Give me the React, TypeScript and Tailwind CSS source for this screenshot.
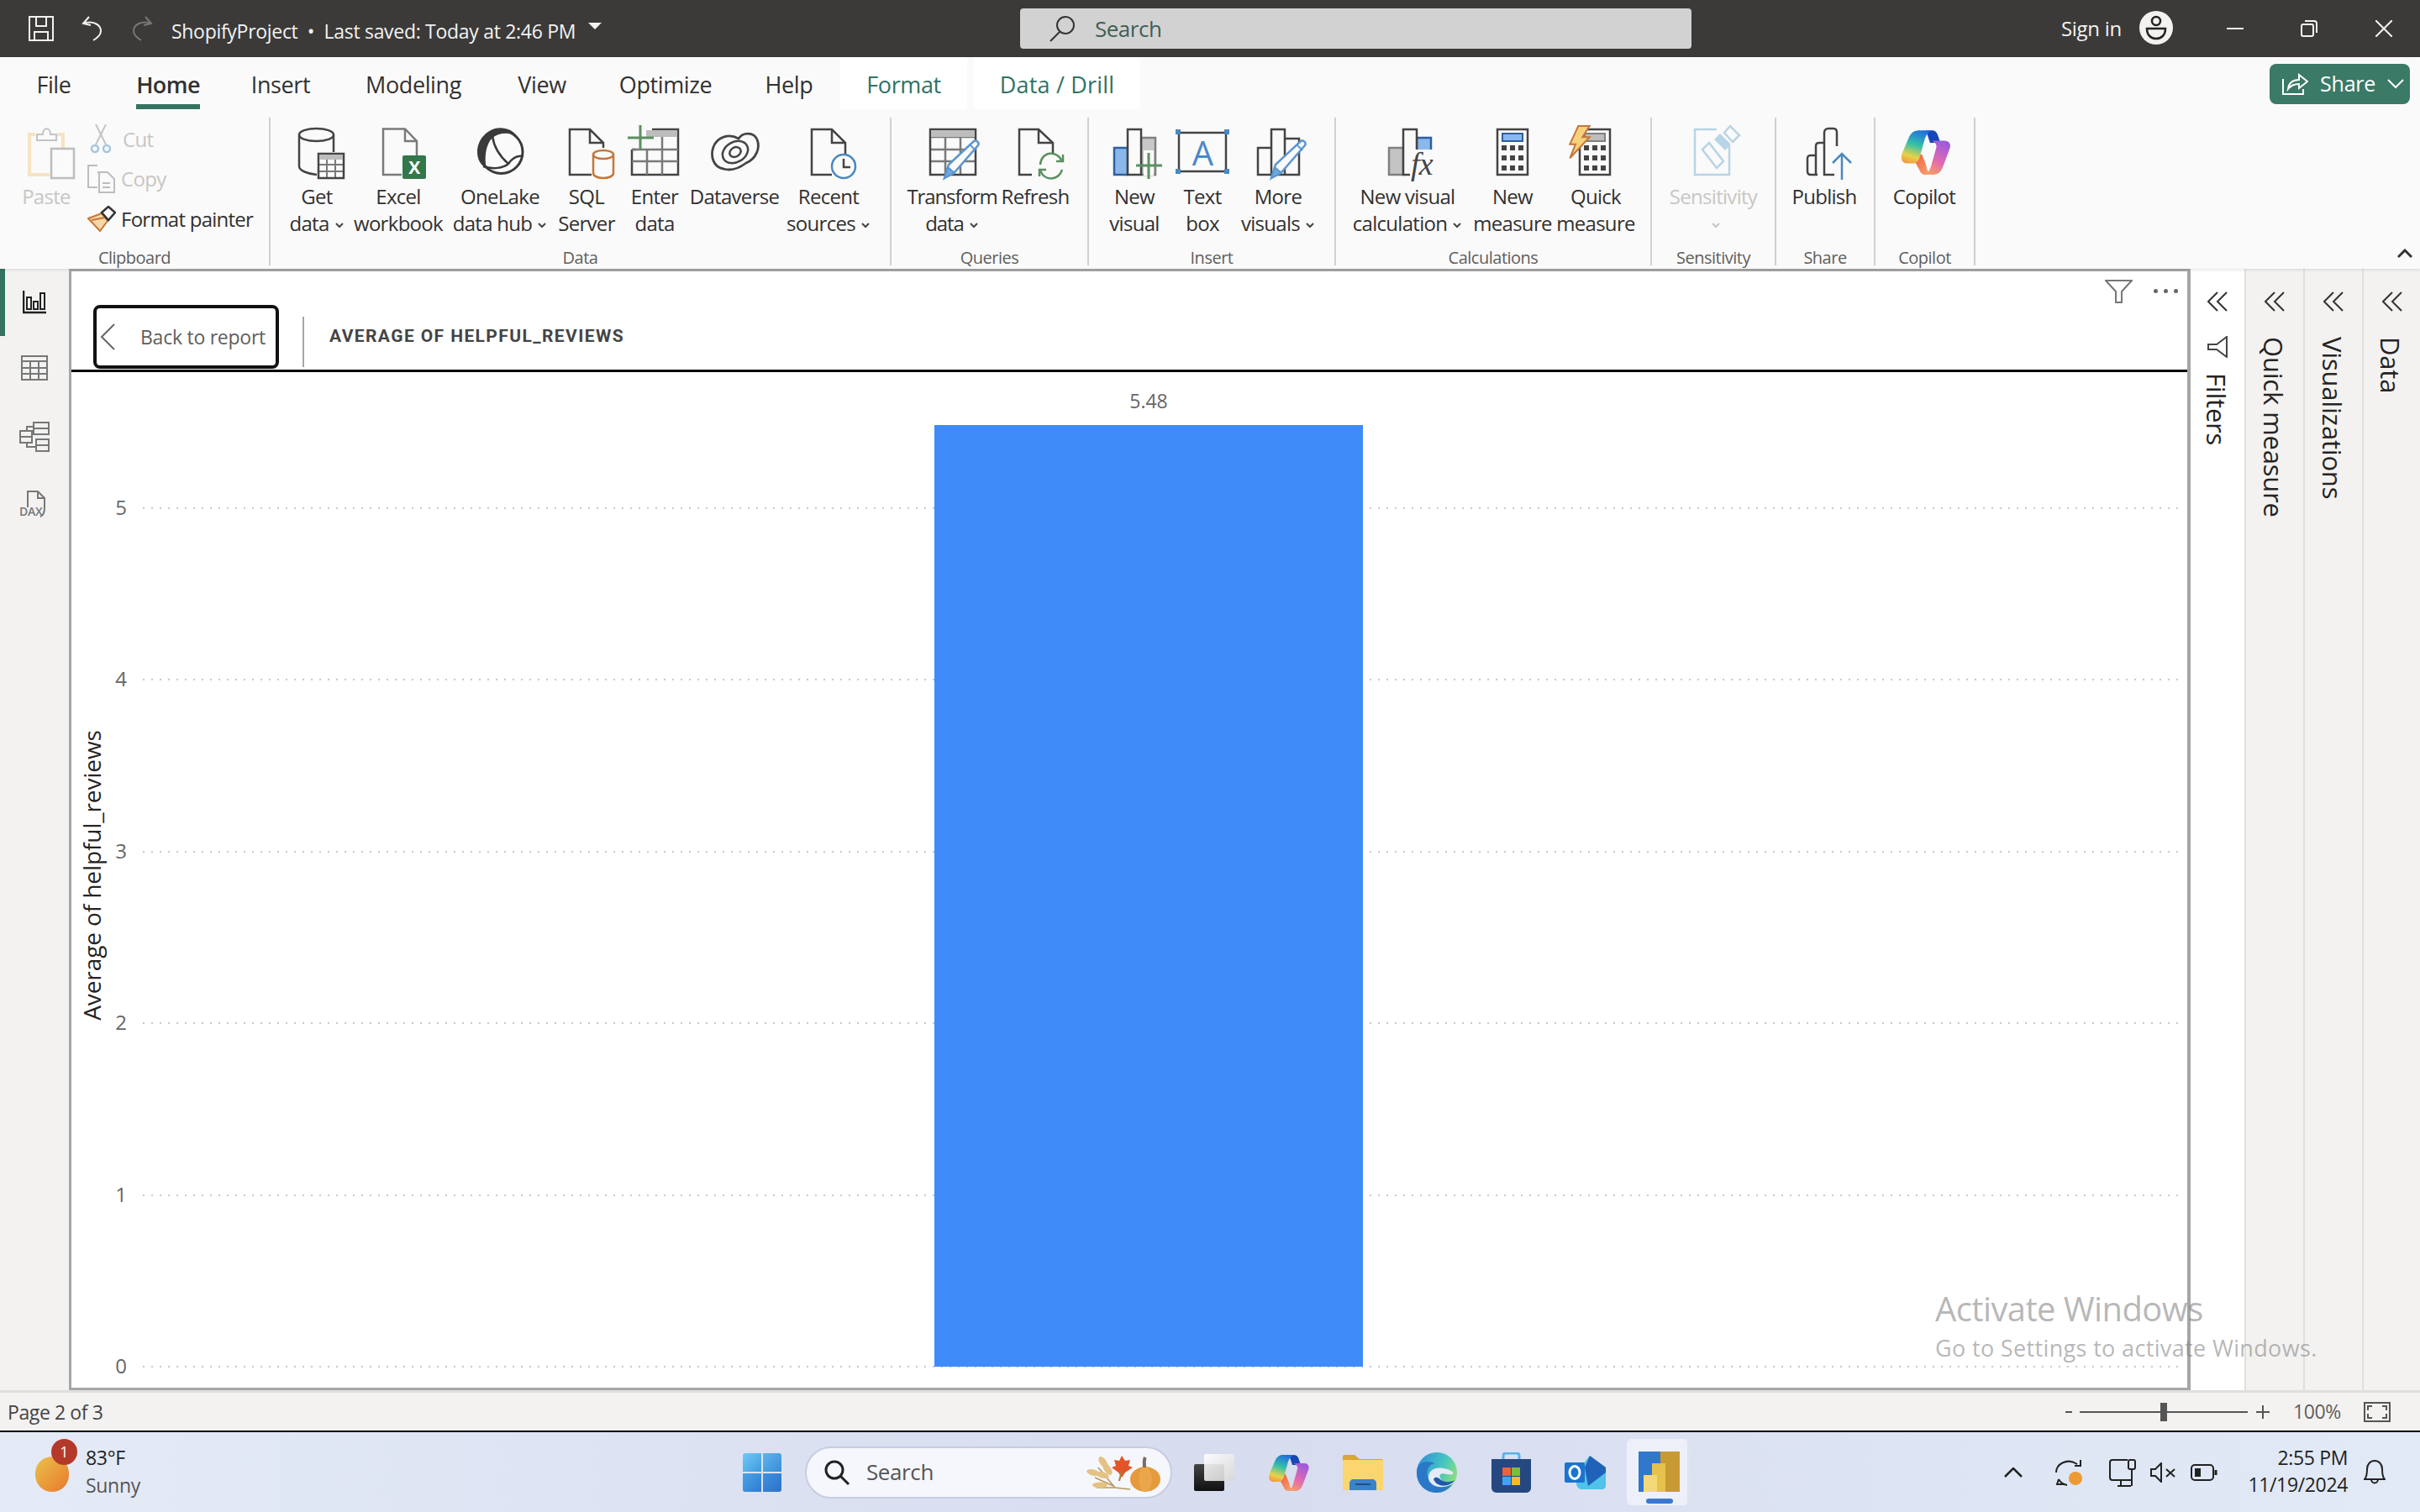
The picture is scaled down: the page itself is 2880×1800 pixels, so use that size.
import React from 'react'

const DK = '#444444'
const GR = '#7a7a7a'
const BL = '#4a88c0'
const GN = '#5b9060'

// 72x68 box, x = 0 is the middle of the button
const Ico = ({ children }: { children: React.ReactNode }) => (
    <svg width={72} height={68} viewBox="-36 0 72 68" fill="none" className="shrink-0 overflow-visible">{children}</svg>
)

const Pencil = ({ x, y }: { x: number; y: number }) => (
    <g transform={`translate(${x} ${y})`}>
        <path d="M0 0L5 -16L35 -44C38 -46 42 -42 40 -39L13 -8Z" fill="#fafafa" stroke="#5a96d0" strokeWidth={2.5} />
        <path d="M0 0L4 -13L12 -6Z" fill="#6fa8e0" stroke="#5a96d0" strokeWidth={2} />
        <path d="M30 -40L37 -33" stroke="#5a96d0" strokeWidth={2} />
    </g>
)

const TableIco = ({ x, w }: { x: number; w: number }) => (
    <g>
        <path d={`M${x} 15H${x + w}M${x + w / 3} 15V60M${x + (2 * w) / 3} 15V60M${x} 30H${x + w}M${x} 44H${x + w}`} stroke={GR} strokeWidth={2.5} />
        <rect x={x} y={6} width={w} height={54} stroke={DK} strokeWidth={2.5} />
        <rect x={x + 1} y={7} width={w - 2} height={8} fill="#bdbdbd" />
    </g>
)

const Calc = ({ x, fill, stroke }: { x: number; fill: string; stroke: string }) => (
    <g>
        <rect x={x} y={6} width={36} height={54} fill="#fafafa" stroke={DK} strokeWidth={2.5} />
        <rect x={x + 6} y={11} width={24} height={9} fill={fill} stroke={stroke} strokeWidth={2} />
        {[28, 40, 52].map(y => [8, 18, 28].map(o => <rect key={`${y}-${o}`} x={x + o - 3} y={y - 3} width={6} height={6} fill={DK} />))}
    </g>
)

const Icons: Record<string, React.ReactNode> = {
    paste: (
        <Ico>
            <path d="M-13 12H-20V60H4M13 12H20V28" stroke="#f6e2c4" strokeWidth={4} />
            <path d="M-11 19V12H-4C-4 3 5 3 5 12H12V19Z" fill="#fafafa" stroke="#c4c4c4" strokeWidth={2} />
            <rect x={6} y={29} width={27} height={35} fill="#fafafa" stroke="#bdbdbd" strokeWidth={2.5} />
        </Ico>
    ),
    get: (
        <Ico>
            <ellipse cx={-0.5} cy={12.5} rx={20.5} ry={7.5} stroke={DK} strokeWidth={2.5} />
            <path d="M-21 12.5V50C-21 55 -11 59 0 60M20 12.5V33" stroke={DK} strokeWidth={2.5} />
            <path d="M2 48H32M2 56H32M12 42V64M22 42V64" stroke={GR} strokeWidth={2} />
            <rect x={2} y={35} width={30} height={29} stroke={DK} strokeWidth={2.5} />
            <rect x={3} y={36} width={28} height={6} fill="#bdbdbd" />
        </Ico>
    ),
    excel: (
        <Ico>
            <path d="M4 60H-18V5.5H8L22 20V38M8 5.5V20H22" stroke={GR} strokeWidth={2.5} />
            <rect x={5} y={37} width={28} height={28} rx={2} fill="#33774a" />
            <text x={19} y={59} textAnchor="middle" fontSize={21} fontWeight={700} fill="#fff" fontFamily="Open Sans">X</text>
        </Ico>
    ),
    onelake: (
        <Ico>
            <circle cx={1.5} cy={33} r={25.5} stroke="#3a3a3a" strokeWidth={3} />
            <path d="M6 5C-10 1 -27 15 -27 33C-27 43 -22 49 -16 53C-19 40 -17 24 -9 16C0 9 14 9 22 16C17 9 12 6 6 5Z" fill="#3a3a3a" />
            <path d="M-9 14C-7 28 2 40 10 47M-20 50C-8 54 4 52 10 47C16 38 22 37 28 38" stroke="#3a3a3a" strokeWidth={2.5} />
        </Ico>
    ),
    sql: (
        <Ico>
            <path d="M6 60H-20V6H4L20 22V28M4 6V22H20" stroke={DK} strokeWidth={2.5} />
            <path d="M8 36V58C8 66 32 66 32 58V36" fill="#fafafa" stroke="#c4773a" strokeWidth={2.5} />
            <ellipse cx={20} cy={36} rx={12} ry={5} fill="#fafafa" stroke="#c4773a" strokeWidth={2.5} />
        </Ico>
    ),
    enter: (
        <Ico>
            <path d="M-27 30V60H28V6H-3M-27 30H-22" stroke={DK} strokeWidth={2.5} />
            <path d="M-27 30H28M-27 44H28M-9 30V60M9 15V60" stroke={GR} strokeWidth={2.5} />
            <rect x={-10} y={7} width={37} height={8} fill="#bdbdbd" />
            <path d="M-32 16H-1M-17 1V31" stroke={GN} strokeWidth={3} />
        </Ico>
    ),
    dataverse: (
        <Ico>
            <path d="M-13 53C-25 51 -29 38 -25 27C-20 14 -6 11 5 17C10 9 23 9 27 18C31 28 26 41 14 46C6 52 -3 56 -13 53Z" stroke={DK} strokeWidth={2.8} />
            <ellipse cx={1} cy={33} rx={16} ry={12} transform="rotate(-30 1 33)" stroke={DK} strokeWidth={2.5} />
            <ellipse cx={1} cy={33} rx={7} ry={5.5} transform="rotate(-30 1 33)" stroke={DK} strokeWidth={2.5} />
        </Ico>
    ),
    recent: (
        <Ico>
            <path d="M4 60H-20V6H4L20 22V36M4 6V22H20" stroke={DK} strokeWidth={2.5} />
            <circle cx={18} cy={50} r={14} fill="#fafafa" stroke={BL} strokeWidth={2.5} />
            <path d="M18 41V51H26" stroke={DK} strokeWidth={2.5} />
        </Ico>
    ),
    transform: (
        <Ico>
            <TableIco x={-26} w={54} />
            <Pencil x={-9} y={64} />
        </Ico>
    ),
    refresh: (
        <Ico>
            <path d="M-4 60H-19V6H4L21 22V34M4 6V22H21" stroke={DK} strokeWidth={2.5} />
            <path d="M6 48C7 32 26 30 32 44M32 54C28 68 9 68 6 54" stroke={GN} strokeWidth={2.5} />
            <path d="M25 44H33V36M13 54H5V62" stroke={GN} strokeWidth={2.5} />
        </Ico>
    ),
    newvisual: (
        <Ico>
            <rect x={8} y={16} width={17} height={44} fill="#c8c8c8" stroke="#808080" strokeWidth={2.5} />
            <rect x={-24} y={28} width={16} height={32} fill="#8ab8ea" stroke="#2f5f9f" strokeWidth={2.5} />
            <rect x={-8} y={6} width={16} height={54} fill="#fafafa" stroke={DK} strokeWidth={2.5} />
            <rect x={11} y={31} width={12} height={30} fill="#fafafa" />
            <path d="M2 49H33M17 34V65" stroke={GN} strokeWidth={3} />
        </Ico>
    ),
    textbox: (
        <Ico>
            <rect x={-28} y={10} width={56} height={46} stroke={DK} strokeWidth={2.5} />
            {[[-29, 9], [29, 9], [-29, 56], [29, 56]].map(([x, y]) => <rect key={`${x}${y}`} x={x - 3} y={y - 3} width={6} height={6} fill="#4a88c0" />)}
            <text x={0} y={49} textAnchor="middle" fontSize={40} fill="#4a88c8" fontFamily="Open Sans">A</text>
        </Ico>
    ),
    more: (
        <Ico>
            <path d="M-8 28H-24V60H-8M8 17H25V60H8M-8 60V6H8V60H-8" stroke={DK} strokeWidth={2.5} />
            <Pencil x={-8} y={64} />
        </Ico>
    ),
    fx: (
        <Ico>
            <rect x={-22} y={28} width={17} height={32} fill="#c4c4c4" stroke="#808080" strokeWidth={2.5} />
            <rect x={11} y={16} width={17} height={20} fill="#8ab8ea" stroke="#2f5f9f" strokeWidth={2.5} />
            <rect x={-5} y={6} width={16} height={54} fill="#fafafa" stroke={DK} strokeWidth={2.5} />
            <rect x={3} y={30} width={30} height={34} fill="#fafafa" />
            <text x={17} y={60} textAnchor="middle" fontSize={38} fontStyle="italic" fill={DK} fontFamily="Liberation Serif">fx</text>
        </Ico>
    ),
    measure: <Ico><Calc x={-18} fill="#8ab8ea" stroke="#2f5f9f" /></Ico>,
    quick: (
        <Ico>
            <Calc x={-19} fill="#bdbdbd" stroke="#808080" />
            <path d="M-20.7 2H-7.3L-15.7 15.3H-7.3L-30.7 40.3L-24 23.7H-30.7Z" fill="#f6d27e" stroke="#c4773a" strokeWidth={2} />
        </Ico>
    ),
    sensitivity: (
        <Ico>
            <path d="M4 6H-22V60H19V26" stroke="#b8d4e6" strokeWidth={2.5} />
            <path d="M-13 30L-5 22L12 44L4 52Z" fill="#fafafa" stroke="#b8d4e6" strokeWidth={2.5} />
            <path d="M1 18L14 31L21 24L8 11Z" fill="#b8d4e6" />
            <path d="M13 10L20 2L31 13L23 21Z" fill="#fafafa" stroke="#b8d4e6" strokeWidth={2.5} />
        </Ico>
    ),
    publish: (
        <Ico>
            <path d="M-8 60H-16C-19 60 -20 58 -20 56V41C-20 38 -19 37 -16 37H-10V26C-10 23 -8 22 -6 22H0V10C0 7 2 5 5 5H11C14 5 15 7 15 10V26M-10 37V60M0 22V60H12" stroke={DK} strokeWidth={2.5} />
            <path d="M21 66V35M10 46L21 35L32 46" stroke={BL} strokeWidth={2.5} />
        </Ico>
    ),
}

const CopilotLogo = ({ w, h, id }: { w: number; h: number; id: string }) => (
    <svg width={w} height={h} viewBox="0 0 48 44" className="shrink-0">
        <defs>
            <linearGradient id={`${id}a`} x1="0.6" y1="0" x2="0.3" y2="1">
                <stop offset="0" stopColor="#1f6fe0" />
                <stop offset="0.45" stopColor="#35c1a8" />
                <stop offset="0.8" stopColor="#e8d24a" />
                <stop offset="1" stopColor="#f0a040" />
            </linearGradient>
            <linearGradient id={`${id}b`} x1="0.7" y1="0" x2="0.3" y2="1">
                <stop offset="0" stopColor="#9a5ae0" />
                <stop offset="0.6" stopColor="#e26ab0" />
                <stop offset="1" stopColor="#f59a6a" />
            </linearGradient>
            <linearGradient id={`${id}c`} x1="0" y1="0" x2="1" y2="1">
                <stop offset="0" stopColor="#f05a3c" />
                <stop offset="1" stopColor="#f8a878" />
            </linearGradient>
        </defs>
        <path d="M24 1H30C33 1 35 3 36 7L38 13H28Z" fill="#1746b8" />
        <path d="M30 11H42C46 11 49 14 47 19L41 35C39 41 36 44 31 44H24C28 40 29 36 30 32L34 18C35 15 33 13 30 11Z" fill={`url(#${id}b)`} />
        <path d="M11 27L18 40C19 43 21 44 24 44H31C26 43 25 39 24 34L20 24Z" fill={`url(#${id}c)`} />
        <path d="M17 1C12 1 9 4 7 9L1 23C-1 29 1 33 6 33H12C15 33 17 30 18 27L23 9C25 4 27 1 32 1Z" fill={`url(#${id}a)`} />
    </svg>
)

const Caret = ({ c = '#444' }: { c?: string }) => (
    <svg width={12} height={8} viewBox="0 0 12 8" className="inline-block ml-[6px] mb-[1px]" fill="none">
        <path d="M2 2L6 6L10 2" stroke={c} strokeWidth={2} />
    </svg>
)

type Btn = { icon?: string; width: string; lines: string[]; caret?: boolean; muted?: boolean }

const RibbonBtn = ({ b }: { b: Btn }) => (
    <div className={`${b.width} flex flex-col items-center shrink-0 ${b.muted ? 'text-[#c8c6c4]' : 'text-[#323130]'}`}>
        <div className="h-[70px] flex items-start">
            {b.icon === 'copilot' ? <div className="w-[72px] flex justify-center pt-[6px] pl-[3px]"><CopilotLogo w={62} h={54} id="rib" /></div> : Icons[b.icon || '']}
        </div>
        {b.lines.map((l, i) => (
            <span key={i} className="h-[32px] leading-[32px] whitespace-nowrap">
                {l}{b.caret && i === b.lines.length - 1 && <Caret c={b.muted ? '#c8c6c4' : '#444'} />}
            </span>
        ))}
    </div>
)

const GroupSep = () => <div className="w-[2px] shrink-0 mt-[10px] mb-[4px] bg-[#d2d0ce]" />

const Group = ({ width, pad, label, children }: { width: string; pad?: string; label: string; children: React.ReactNode }) => (
    <div className={`${width} shrink-0 flex flex-col`}>
        <div className={`h-[152px] pt-[18px] flex ${pad || ''}`}>{children}</div>
        <div className="h-[38px] pt-[12px] text-center text-[20px] leading-[26px] tracking-[-0.5px] text-[#605e5c]">{label}</div>
    </div>
)

const tabs = [
    { t: 'File', w: 'w-[128px]' },
    { t: 'Home', w: 'w-[144px]' },
    { t: 'Insert', w: 'w-[124px]' },
    { t: 'Modeling', w: 'w-[192px]' },
    { t: 'View', w: 'w-[114px]' },
    { t: 'Optimize', w: 'w-[180px]' },
    { t: 'Help', w: 'w-[114px]' },
]

const Tabs = () => (
    <div className="h-[62px] flex text-[27px] tracking-[-0.4px] text-[#323130]">
        {tabs.map(t => (
            <div key={t.t} className={`${t.w} shrink-0 flex justify-center pt-[13px] relative`}>
                <span className={t.t === 'Home' ? 'relative font-semibold tracking-[-0.6px]' : ''}>
                    {t.t}
                    {t.t === 'Home' && <span className="absolute left-0 right-0 top-[43px] h-[6px] bg-[#33735f]" />}
                </span>
            </div>
        ))}
        <div className="w-[151px] ml-[4px] shrink-0 bg-white text-[#2f7263] font-medium flex justify-center pt-[13px]">Format</div>
        <div className="w-[198px] ml-[8px] shrink-0 bg-white text-[#2f7263] font-medium tracking-[0.2px] flex justify-center pt-[13px]">Data / Drill</div>
    </div>
)

const Clipboard = () => (
    <Group width="w-[320px]" label="Clipboard">
        <RibbonBtn b={{ icon: 'paste', width: 'w-[110px]', lines: ['Paste'], muted: true }} />
        <div className="flex flex-col -mt-[3px] ml-[-6px] gap-[4px]">
            <div className="h-[44px] flex items-center gap-[10px] text-[#c8c6c4]">
                <svg width={32} height={36} viewBox="0 0 32 36" fill="none"><path d="M10 0L22 24M22 0L10 24" stroke="#c4c4c4" strokeWidth={2} /><circle cx={9} cy={29} r={4} stroke="#a4c6e0" strokeWidth={2.5} /><circle cx={23} cy={29} r={4} stroke="#a4c6e0" strokeWidth={2.5} /></svg>
                Cut
            </div>
            <div className="h-[44px] flex items-center gap-[6px] text-[#c8c6c4]">
                <svg width={34} height={34} viewBox="0 0 34 34" fill="none"><path d="M12 1H1V27H12M12 9H24L32 17V33H14V9H12M14 6" stroke="#bdbdbd" strokeWidth={2} /><path d="M18 22H27M18 27H27" stroke="#bdbdbd" strokeWidth={2} /></svg>
                Copy
            </div>
            <div className="h-[44px] flex items-center gap-[6px] text-[#323130] tracking-[-0.75px] mt-[1px]">
                <svg width={34} height={32} viewBox="0 0 34 32" fill="none"><path d="M1 15L17 9L24 18L15 30Z" fill="#f6d8a8" stroke="#c4773a" strokeWidth={2} /><path d="M5 17L21 14" stroke="#c4773a" strokeWidth={2} /><path d="M17 8L25 1L33 8L25 17Z" fill="#fafafa" stroke="#333" strokeWidth={2.5} /></svg>
                Format painter
            </div>
        </div>
    </Group>
)

const Ribbon = () => (
    <div className="h-[252px] bg-[#fafafa] relative z-10 shadow-[0_1px_4px_rgba(0,0,0,0.12)] text-[24px] tracking-[-0.7px]">
        <Tabs />
        <div className="h-[190px] flex">
            <Clipboard />
            <GroupSep />
            <Group width="w-[737px]" pad="pl-[7px]" label="Data">
                <RibbonBtn b={{ icon: 'get', width: 'w-[96px]', lines: ['Get', 'data'], caret: true }} />
                <RibbonBtn b={{ icon: 'excel', width: 'w-[98px]', lines: ['Excel', 'workbook'] }} />
                <RibbonBtn b={{ icon: 'onelake', width: 'w-[144px]', lines: ['OneLake', 'data hub'], caret: true }} />
                <RibbonBtn b={{ icon: 'sql', width: 'w-[62px]', lines: ['SQL', 'Server'] }} />
                <RibbonBtn b={{ icon: 'enter', width: 'w-[100px]', lines: ['Enter', 'data'] }} />
                <RibbonBtn b={{ icon: 'dataverse', width: 'w-[90px]', lines: ['Dataverse'] }} />
                <RibbonBtn b={{ icon: 'recent', width: 'w-[134px]', lines: ['Recent', 'sources'], caret: true }} />
            </Group>
            <GroupSep />
            <Group width="w-[233px]" pad="pl-[6px]" label="Queries">
                <div className="tracking-[-1.1px] flex">
                    <RibbonBtn b={{ icon: 'transform', width: 'w-[132px]', lines: ['Transform', 'data'], caret: true }} />
                </div>
                <RibbonBtn b={{ icon: 'refresh', width: 'w-[66px]', lines: ['Refresh'] }} />
            </Group>
            <GroupSep />
            <Group width="w-[292px]" pad="pl-[10px]" label="Insert">
                <RibbonBtn b={{ icon: 'newvisual', width: 'w-[88px]', lines: ['New', 'visual'] }} />
                <RibbonBtn b={{ icon: 'textbox', width: 'w-[74px]', lines: ['Text', 'box'] }} />
                <RibbonBtn b={{ icon: 'more', width: 'w-[106px]', lines: ['More', 'visuals'], caret: true }} />
            </Group>
            <GroupSep />
            <Group width="w-[374px]" pad="pl-[10px]" label="Calculations">
                <RibbonBtn b={{ icon: 'fx', width: 'w-[150px]', lines: ['New visual', 'calculation'], caret: true }} />
                <RibbonBtn b={{ icon: 'measure', width: 'w-[100px]', lines: ['New', 'measure'] }} />
                <RibbonBtn b={{ icon: 'quick', width: 'w-[98px]', lines: ['Quick', 'measure'] }} />
            </Group>
            <GroupSep />
            <Group width="w-[146px]" label="Sensitivity">
                <RibbonBtn b={{ icon: 'sensitivity', width: 'w-[146px]', lines: ['Sensitivity', ''], caret: true, muted: true }} />
            </Group>
            <GroupSep />
            <Group width="w-[116px]" label="Share">
                <RibbonBtn b={{ icon: 'publish', width: 'w-[114px]', lines: ['Publish'] }} />
            </Group>
            <GroupSep />
            <Group width="w-[117px]" label="Copilot">
                <RibbonBtn b={{ icon: 'copilot', width: 'w-[116px]', lines: ['Copilot'] }} />
            </Group>
            <GroupSep />
        </div>
        {/* share button and collapse chevron sit over the tab row */}
        <div className="absolute left-[2701px] top-[8px] w-[167px] h-[48px] rounded-lg bg-[#3a7a66] text-white text-[25px] tracking-[-0.2px] flex items-center pl-[14px] gap-[14px]">
            <svg width={32} height={28} viewBox="0 0 32 28" fill="none" stroke="#fff" strokeWidth={2}><path d="M2 8V26H26V20" /><path d="M8 20C9 12 14 9 21 9V3L31 11L21 19V14C15 14 11 16 8 20Z" /></svg>
            Share
            <svg width={20} height={12} viewBox="0 0 20 12" fill="none" stroke="#fff" strokeWidth={2}><path d="M1 1L10 10L19 1" /></svg>
        </div>
        <svg width={18} height={12} viewBox="0 0 18 12" fill="none" stroke="#333" strokeWidth={3} className="absolute left-[2853px] top-[228px]"><path d="M1 10L9 2L17 10" /></svg>
    </div>
)

const TitleBar = () => (
    <div className="h-[68px] bg-[#3b3a39] flex items-center text-[#f3f2f1] shrink-0">
        <svg width={30} height={30} viewBox="0 0 30 30" fill="none" stroke="#f3f2f1" strokeWidth={2} className="ml-[34px]"><path d="M1 1H29V29H1ZM9 1V12H21V1M7 29V19H23V29" /></svg>
        <svg width={28} height={30} viewBox="0 0 28 30" fill="none" stroke="#f3f2f1" strokeWidth={2} className="ml-[32px]"><path d="M10 1L3 9L12 11M3 9C14 5 24 10 24 18C24 23 20 26 15 29" /></svg>
        <svg width={28} height={30} viewBox="0 0 28 30" fill="none" stroke="#777" strokeWidth={2} className="ml-[31px]"><path d="M18 1L25 9L16 11M25 9C14 5 4 10 4 18C4 23 8 26 13 29" /></svg>
        <span className="ml-[21px] mt-[6px] text-[23px] tracking-[-0.3px] whitespace-nowrap w-[496px]">ShopifyProject&nbsp;&nbsp;•&nbsp;&nbsp;Last saved: Today at 2:46 PM</span>
        <svg width={16} height={8} viewBox="0 0 16 8" className="mb-[6px]"><path d="M0 0H16L8 8Z" fill="#f3f2f1" /></svg>
        <div className="ml-[498px] w-[799px] h-[48px] bg-[#d2d2d2] rounded-sm flex items-center pl-[34px] text-[#3f5f55] text-[26px] tracking-[-0.5px]">
            <svg width={32} height={32} viewBox="0 0 32 32" fill="none" stroke="#333" strokeWidth={2}><circle cx={20} cy={12} r={10} /><path d="M13 20L2 31" /></svg>
            <span className="ml-[23px]">Search</span>
        </div>
        <span className="ml-[440px] text-[24px] tracking-[-0.3px] w-[93px]">Sign in</span>
        <svg width={40} height={40} viewBox="0 0 40 40" className="-mt-[2px]"><circle cx={20} cy={20} r={20} fill="#f3f2f1" /><g fill="none" stroke="#222" strokeWidth={2.5}><circle cx={20} cy={12} r={5} /><path d="M9 21H31C31 29 26 33 20 33C14 33 9 29 9 21Z" /></g></svg>
        <svg width={20} height={4} viewBox="0 0 20 4" className="ml-[64px]"><path d="M0 2H20" stroke="#f3f2f1" strokeWidth={2} /></svg>
        <svg width={20} height={20} viewBox="0 0 20 20" fill="none" stroke="#f3f2f1" strokeWidth={2} className="ml-[68px]"><rect x={1} y={5} width={14} height={14} rx={2} /><path d="M5 1H16C18 1 19 2 19 4V15" /></svg>
        <svg width={20} height={20} viewBox="0 0 20 20" fill="none" stroke="#f3f2f1" strokeWidth={2} className="ml-[69px]"><path d="M0 0L20 20M20 0L0 20" /></svg>
    </div>
)

const LeftNav = () => (
    <div className="w-[82px] shrink-0 bg-[#f3f2f1] relative flex flex-col items-center">
        <div className="absolute left-0 top-0 w-[6px] h-[80px] bg-[#33735f]" />
        <svg width={28} height={28} viewBox="0 0 28 28" fill="none" stroke="#222" strokeWidth={2} className="mt-[26px]"><path d="M1 0V26H28" strokeWidth={2.5} /><rect x={5} y={8} width={5} height={14} /><rect x={13} y={13} width={5} height={9} /><rect x={21} y={3} width={5} height={19} /></svg>
        <svg width={32} height={30} viewBox="0 0 32 30" fill="none" stroke="#777" strokeWidth={2} className="mt-[49px]"><rect x={1} y={1} width={30} height={28} /><path d="M1 7H31M1 15H31M1 22H31M11 7V29M21 7V29" /></svg>
        <svg width={36} height={36} viewBox="0 0 36 36" fill="none" stroke="#777" strokeWidth={2} className="mt-[49px]"><rect x={17} y={1} width={18} height={14} /><path d="M17 8H35" /><rect x={1} y={11} width={14} height={14} /><path d="M1 18H15" /><rect x={20} y={21} width={15} height={14} /><path d="M20 28H35M9 11V6H17M9 25V30H20" /></svg>
        <div className="relative w-[36px] h-[32px] mt-[46px]">
            <svg width={36} height={32} viewBox="0 0 36 32" fill="none" stroke="#777" strokeWidth={2} className="absolute left-0 top-0"><path d="M10 20V1H22L30 9V20C30 26 28 30 25 31M22 1V9H30" /></svg>
            <span className="absolute left-0 top-[18px] text-[14px] leading-[14px] font-semibold tracking-[-0.3px] text-[#777]">DAX</span>
        </div>
    </div>
)

const Chart = () => {
    const ticks = [[5, 605], [4, 809], [3, 1014], [2, 1218], [1, 1423], [0, 1627]]
    return (
        <svg viewBox="85 443 2518 1209" className="w-[2518px] h-[1209px] block" fontFamily="Open Sans">
            {ticks.map(([v, y]) => (
                <g key={v}>
                    <line x1={170} x2={2595} y1={y} y2={y} stroke="#c8c8c8" strokeWidth={2} strokeDasharray="2 8" />
                    <text x={144} y={y + 8} textAnchor="middle" fontSize={24} fill="#666">{v}</text>
                </g>
            ))}
            <rect x={1112} y={506} width={510} height={1121} fill="#3f8bfa" />
            <text x={1367} y={486} textAnchor="middle" fontSize={23} fill="#666">5.48</text>
            <text transform="translate(120 1042) rotate(-90)" textAnchor="middle" fontSize={28} fill="#252423" letterSpacing={-0.1}>Average of helpful_reviews</text>
        </svg>
    )
}

const Canvas = () => (
    <div className="w-[2525px] shrink-0 border-t-[3px] border-l-[3px] border-r-[4px] border-b-[3px] border-[#a6a6a6] bg-white flex flex-col">
        <div className="h-[120px] shrink-0 border-b-[3px] border-black flex items-end pl-[26px] pb-[1px]">
            <div className="w-[221px] h-[76px] border-[4px] border-[#111] rounded-[8px] flex items-center pl-[3px] text-[#605e5c] text-[23px] tracking-[-0.25px]">
                <svg width={20} height={32} viewBox="0 0 20 32" fill="none" stroke="#666" strokeWidth={2}><path d="M18 1L3 16L18 31" /></svg>
                <span className="ml-[29px] whitespace-nowrap">Back to report</span>
            </div>
            <div className="w-[2px] h-[60px] ml-[28px] mb-[2px] bg-[#a6a6a6]" />
            <span className="ml-[30px] mb-[23px] font-['Roboto'] font-bold text-[21px] tracking-[1.4px] text-[#444]">AVERAGE OF HELPFUL_REVIEWS</span>
            <div className="ml-auto self-start mt-[10px] mr-[11px] flex items-start gap-[25px]">
                <svg width={33} height={28} viewBox="0 0 33 28" fill="none" stroke="#777" strokeWidth={2}><path d="M1 1H32L20 14V27H13V14Z" /></svg>
                <div className="flex gap-[7px] mt-[11px]">
                    <span className="w-[5px] h-[5px] rounded-full bg-[#666]" />
                    <span className="w-[5px] h-[5px] rounded-full bg-[#666]" />
                    <span className="w-[5px] h-[5px] rounded-full bg-[#666]" />
                </div>
            </div>
        </div>
        <Chart />
    </div>
)

const DoubleChevron = () => (
    <svg width={24} height={24} viewBox="0 0 24 24" fill="none" stroke="#333" strokeWidth={2}><path d="M12 1L1 12L12 23M23 1L12 12L23 23" /></svg>
)

const Pane = ({ label, w, white, icon }: { label: string; w: string; white?: boolean; icon?: boolean }) => (
    <div className={`${w} shrink-0 flex flex-col items-center pt-[27px] ${white ? 'bg-white' : 'bg-[#f3f2f1] border-l-[2px] border-[#e1dfdd]'}`}>
        <DoubleChevron />
        {icon && (
            <svg width={24} height={26} viewBox="0 0 24 26" fill="none" stroke="#444" strokeWidth={2} className="mt-[29px] -mb-[38px]"><path d="M23 1V25L11 16H1V10H11Z" /></svg>
        )}
        <span className={`[writing-mode:vertical-rl] text-[31px] leading-[34px] tracking-[-0.2px] text-[#252423] -ml-[3px] ${icon ? 'mt-[56px]' : 'mt-[30px]'}`}>{label}</span>
    </div>
)

const StatusBar = () => (
    <div className="h-[48px] shrink-0 bg-[#f3f2f1] border-t-[3px] border-[#e1dfdd] flex items-center text-[#444] text-[23px] tracking-[-0.4px]">
        <span className="ml-[9px] w-[2449px] mt-[2px]">Page 2 of 3</span>
        <span className="w-[8px] h-[2px] bg-[#555]" />
        <div className="ml-[9px] w-[200px] h-[2px] bg-[#555] relative">
            <span className="absolute left-[96px] top-[-10px] w-[8px] h-[22px] bg-[#555]" />
        </div>
        <svg width={16} height={16} viewBox="0 0 16 16" className="ml-[10px]" stroke="#555" strokeWidth={2}><path d="M0 8H16M8 0V16" /></svg>
        <span className="ml-[28px] text-[#605e5c]">100%</span>
        <svg width={32} height={24} viewBox="0 0 32 24" fill="none" stroke="#555" strokeWidth={2} className="ml-[27px]"><rect x={1} y={1} width={30} height={22} /><path d="M5 10V5H10M22 5H27V10M5 14V19H10M22 19H27V14" /></svg>
    </div>
)

const Harvest = () => (
    <svg width={96} height={48} viewBox="0 0 96 48" className="shrink-0" fill="none">
        <path d="M18 18L38 42L56 44M14 30L36 40M16 42L38 42" stroke="#b9985a" strokeWidth={1.5} />
        <g fill="#e3c283">
            <ellipse cx={24} cy={12} rx={8} ry={4} transform="rotate(55 24 12)" />
            <ellipse cx={29} cy={20} rx={8} ry={4} transform="rotate(55 29 20)" />
            <ellipse cx={12} cy={24} rx={8} ry={3.5} transform="rotate(15 12 24)" />
            <ellipse cx={23} cy={27} rx={8} ry={3.5} transform="rotate(15 23 27)" />
            <ellipse cx={20} cy={39} rx={9} ry={3.5} />
        </g>
        <path d="M46 4L50 10L56 9L54 16L59 18L50 24L46 30L42 24L34 18L39 16L37 9L43 10Z" fill="#e2552a" />
        <path d="M46 22L43 34" stroke="#a8832a" strokeWidth={2} />
        <ellipse cx={74} cy={32} rx={18} ry={15} fill="#e59a3c" />
        <ellipse cx={74} cy={32} rx={8} ry={15} fill="#eaa64a" />
        <path d="M73 18C73 12 72 9 74 6" stroke="#7d6a5e" strokeWidth={4} />
    </svg>
)

const TaskApps = () => (
    <>
        {/* task view */}
        <div className="w-[48px] h-[44px] ml-[26px] relative shrink-0">
            <div className="absolute left-0 bottom-0 w-[36px] h-[32px] rounded-[2px] bg-gradient-to-b from-[#444] to-[#111]" />
            <div className="absolute right-0 top-0 w-[36px] h-[32px] rounded-[2px] bg-gradient-to-br from-[#fff] to-[#d8d8d8] opacity-90" />
        </div>
        <div className="ml-[41px]"><CopilotLogo w={48} h={44} id="tb" /></div>
        {/* explorer */}
        <svg width={48} height={42} viewBox="0 0 48 42" className="ml-[40px] shrink-0">
            <path d="M0 2C0 1 1 0 2 0H14L20 5H46C47 5 48 6 48 7V12H0Z" fill="#d9a534" />
            <rect x={0} y={6} width={48} height={36} rx={1.5} fill="#fbd66f" />
            <path d="M8 42V34C8 31 10 29 13 29H35C38 29 40 31 40 34V42Z" fill="#3b82c9" />
            <path d="M15 35H33" stroke="#1f4f86" strokeWidth={2} />
        </svg>
        {/* edge */}
        <svg width={48} height={48} viewBox="0 0 48 48" className="ml-[40px] shrink-0">
            <defs>
                <linearGradient id="edgeA" x1="0" y1="0.2" x2="1" y2="0.6"><stop offset="0" stopColor="#2f8fd8" /><stop offset="0.6" stopColor="#45c6c0" /><stop offset="1" stopColor="#8de07a" /></linearGradient>
            </defs>
            <circle cx={24} cy={24} r={24} fill="url(#edgeA)" />
            <path d="M0 24C0 10 12 9 22 13C14 14 10 22 14 32C18 42 32 44 44 36C38 44 32 48 24 48C10 48 0 38 0 24Z" fill="#2b78c8" />
            <path d="M14 30C14 38 26 46 42 38C44 37 45 35 46 33C38 38 30 36 28 30C26 26 30 24 36 26C48 28 44 22 36 20C24 16 14 20 14 30Z" fill="#e4eaf6" />
            <path d="M20 32C24 42 38 42 46 33C40 36 32 36 28 32C26 30 22 28 20 32Z" fill="#1f5aa8" />
        </svg>
        {/* store */}
        <svg width={47} height={48} viewBox="0 0 47 48" className="ml-[41px] shrink-0">
            <path d="M14 8V4C14 2 15 1 17 1H30C32 1 33 2 33 4V8" fill="none" stroke="#5ab0e8" strokeWidth={3} />
            <path d="M0 8H47V42C47 46 44 48 41 48H6C3 48 0 46 0 42Z" fill="#24487f" />
            <rect x={13} y={18} width={10} height={10} fill="#e8643c" />
            <rect x={24} y={18} width={10} height={10} fill="#7fba42" />
            <rect x={13} y={29} width={10} height={10} fill="#42a4ec" />
            <rect x={24} y={29} width={10} height={10} fill="#f6b92e" />
        </svg>
        {/* outlook */}
        <svg width={49} height={40} viewBox="0 0 49 40" className="ml-[40px] shrink-0">
            <path d="M14 20L30 0L49 14V36C49 38 47 40 45 40H20C16 40 14 36 14 32Z" fill="#4fc3ea" />
            <path d="M24 14L30 0L49 14V20L28 36Z" fill="#1f62b8" />
            <rect x={0} y={8} width={24} height={24} rx={2} fill="#1a74d0" />
            <ellipse cx={12} cy={20} rx={6} ry={7.5} fill="none" stroke="#fff" strokeWidth={3} />
        </svg>
        {/* power bi, running */}
        <div className="relative w-[75px] h-[79px] ml-[25px] -mt-[1px] rounded-[6px] bg-[#edf0f8] border-r-[3px] border-[#dfe3f0] flex justify-start pl-[14px] pt-[15px] shrink-0">
            <svg width={49} height={48} viewBox="0 0 49 48">
                <rect x={0} y={0} width={49} height={48} fill="#2f78cc" />
                <rect x={26} y={0} width={23} height={48} fill="#c89a34" />
                <rect x={16} y={14} width={16} height={34} fill="#e6c24c" />
                <rect x={6} y={28} width={16} height={20} fill="#f2d878" />
            </svg>
            <div className="absolute left-[23px] top-[71px] w-[32px] h-[6px] rounded-full bg-[#3a78d0]" />
        </div>
    </>
)

const TaskBar = () => (
    <div className="h-[97px] shrink-0 border-t-[2px] border-black bg-gradient-to-r from-[#e4ebf6] via-[#d7dcef] to-[#e2eaf6] flex items-center text-[#222]">
        <div className="relative w-[40px] h-[42px] ml-[42px] mt-[4px] shrink-0">
            <div className="w-[40px] h-[42px] rounded-full bg-gradient-to-br from-[#e8c24c] to-[#e8762c]" />
            <div className="absolute left-[19px] top-[-21px] w-[31px] h-[31px] rounded-full bg-[#b5392a] text-white text-[18px] leading-[31px] text-center">1</div>
        </div>
        <div className="ml-[20px] w-[104px] shrink-0 text-[23px] tracking-[-0.3px] leading-[33px] -mt-[2px]">
            <div>83°F</div>
            <div className="text-[#555]">Sunny</div>
        </div>
        {/* start */}
        <div className="ml-[678px] w-[46px] h-[46px] grid grid-cols-2 grid-rows-2 gap-[2px] shrink-0">
            <div className="rounded-tl-[3px] bg-gradient-to-br from-[#6fcbf6] to-[#3f9ae0]" />
            <div className="rounded-tr-[3px] bg-gradient-to-br from-[#5fb4ec] to-[#3a8cd8]" />
            <div className="rounded-bl-[3px] bg-gradient-to-br from-[#4aa4e8] to-[#2f7cd0]" />
            <div className="rounded-br-[3px] bg-gradient-to-br from-[#3f92e0] to-[#2f70c8]" />
        </div>
        {/* search */}
        <div className="ml-[28px] w-[437px] h-[62px] rounded-full bg-[#f5f7fc] border-[2px] border-[#c6cde2] flex items-center pl-[20px] pr-[8px] text-[26px] tracking-[-0.4px] text-[#555] shrink-0">
            <svg width={32} height={32} viewBox="0 0 32 32" fill="none" stroke="#222" strokeWidth={3}><circle cx={13} cy={13} r={10} /><path d="M20 20L30 30" /></svg>
            <span className="ml-[19px]">Search</span>
            <div className="ml-auto"><Harvest /></div>
        </div>
        <TaskApps />
        {/* tray */}
        <svg width={22} height={12} viewBox="0 0 22 12" fill="none" stroke="#222" strokeWidth={2.5} className="ml-[374px] shrink-0"><path d="M1 11L11 1L21 11" /></svg>
        <svg width={32} height={32} viewBox="0 0 32 32" fill="none" stroke="#222" strokeWidth={2} className="ml-[39px] shrink-0"><path d="M1 16C1 6 14 -2 26 6M30 1V8H23M4 24L2 30H10" /><path d="M4 24C6 28 9 30 14 31" /><circle cx={24} cy={23} r={8} fill="#ee9a33" stroke="none" /></svg>
        <svg width={32} height={34} viewBox="0 0 32 34" fill="none" stroke="#222" strokeWidth={2} className="ml-[32px] shrink-0"><path d="M22 2H4C2 2 1 3 1 5V23C1 25 2 26 4 26H26M10 33H26M14 26V33M27 12V33" /><rect x={23} y={2} width={8} height={11} rx={2} /></svg>
        <svg width={30} height={24} viewBox="0 0 30 24" fill="none" stroke="#222" strokeWidth={2} className="ml-[17px] shrink-0"><path d="M1 8V16H6L13 23V1L6 8Z" /><path d="M19 8L29 17M29 8L19 17" /></svg>
        <svg width={32} height={20} viewBox="0 0 32 20" fill="none" stroke="#222" strokeWidth={2} className="ml-[18px] shrink-0"><rect x={1} y={1} width={26} height={18} rx={4} /><rect x={5} y={5} width={7} height={10} fill="#222" stroke="none" /><path d="M30 7V13" strokeWidth={3} /></svg>
        <div className="ml-[20px] w-[135px] -mt-[3px] text-right text-[23px] leading-[32px] tracking-[-0.35px] shrink-0 whitespace-nowrap">
            <div>2:55 PM</div>
            <div>11/19/2024</div>
        </div>
        <svg width={26} height={30} viewBox="0 0 26 30" fill="none" stroke="#222" strokeWidth={2} className="ml-[19px] shrink-0"><path d="M1 23C4 20 4 16 4 11C4 5 8 1 13 1C18 1 22 5 22 11C22 16 22 20 25 23ZM9 23C9 29 17 29 17 23" /></svg>
    </div>
)

export default function App() {
    return (
        <div className="w-[2880px] h-[1800px] relative overflow-hidden flex flex-col font-['Open_Sans',sans-serif] bg-white">
            <TitleBar />
            <Ribbon />
            <div className="h-[1335px] flex shrink-0">
                <LeftNav />
                <Canvas />
                <Pane label="Filters" w="w-[64px]" white icon />
                <Pane label="Quick measure" w="w-[70px]" />
                <Pane label="Visualizations" w="w-[70px]" />
                <Pane label="Data" w="w-[69px]" />
            </div>
            <StatusBar />
            <TaskBar />
            {/* windows watermark lies over everything */}
            <div className="absolute left-[2303px] top-[1532px] pointer-events-none text-[#80808090] whitespace-nowrap">
                <div className="text-[40px] leading-[52px] tracking-[-0.6px]">Activate Windows</div>
                <div className="text-[27px] leading-[42px] tracking-[0.35px]">Go to Settings to activate Windows.</div>
            </div>
        </div>
    )
}
